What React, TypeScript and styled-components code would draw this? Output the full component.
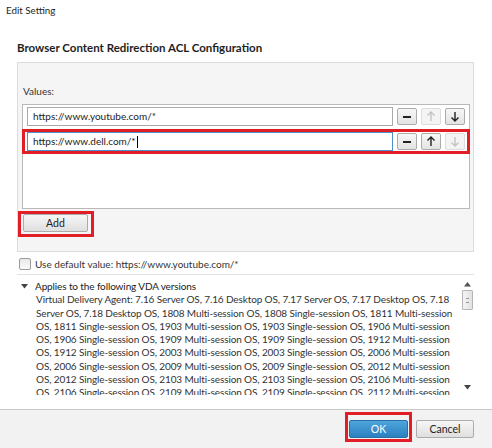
import React from 'react'
import styled, { createGlobalStyle } from 'styled-components'

const GlobalStyle = createGlobalStyle`
  html, body {
    margin: 0;
    padding: 0;
    background: #ffffff;
  }
  body {
    font-family: Lato, "Open Sans", "Liberation Sans", sans-serif;
    color: #1e1e1e;
  }
`

const Dialog = styled.div`
  width: 492px;
  height: 448px;
  display: flex;
  flex-direction: column;
  overflow: hidden;
  background: #fff;
`

const TitleBar = styled.div`
  height: 20px;
  line-height: 20px;
  padding-left: 6px;
  font-size: 9.8px;
`

const Body = styled.div`
  flex: 1;
  padding: 0 18px 0 17px;
  display: flex;
  flex-direction: column;
  min-height: 0;
`

const Heading = styled.h2`
  margin: 20px 0 6px;
  height: 16px;
  line-height: 16px;
  font-size: 11.5px;
  font-weight: 700;
`

const GroupBox = styled.div`
  background: #f5f5f5;
  border: 1px solid #dcdcdc;
  padding: 21px 3px 14px 4px;
`

const FieldLabel = styled.div`
  font-size: 10px;
  line-height: 14px;
  height: 14px;
  padding-left: 1px;
  margin-bottom: 6px;
  color: #333;
`

const ListBox = styled.div`
  height: 105px;
  box-sizing: border-box;
  background: #fff;
  border: 1px solid #b9b9b9;
`

const Row = styled.div<{ $highlight?: boolean }>`
  display: flex;
  align-items: center;
  gap: 4px;
  height: 19px;
  padding: ${p => (p.$highlight ? '0 2px 0 2px' : '2px 4px 2px 4px')};
  margin: ${p => (p.$highlight ? '1px -1px 0' : '0')};
  border: ${p => (p.$highlight ? '3px solid #e11d26' : 'none')};
`

const ValueInput = styled.div<{ $focused?: boolean }>`
  flex: 1;
  height: 19px;
  box-sizing: border-box;
  border: 1px solid ${p => (p.$focused ? '#4a90cf' : '#a9a9a9')};
  background: #fff;
  font-size: 10px;
  line-height: 17px;
  padding-left: 5px;
  color: #222;
  display: flex;
  align-items: center;
`

const Caret = styled.span`
  display: inline-block;
  width: 1px;
  height: 12px;
  background: #000;
  margin-left: 1px;
`

const IconButton = styled.div<{ $disabled?: boolean }>`
  width: 20px;
  height: 17px;
  box-sizing: border-box;
  border: 1px solid ${p => (p.$disabled ? '#dcdcdc' : '#acacac')};
  border-radius: 2px;
  background: ${p =>
    p.$disabled ? '#f4f4f4' : 'linear-gradient(#f7f7f7, #e3e3e3)'};
  display: flex;
  align-items: center;
  justify-content: center;
  color: ${p => (p.$disabled ? '#c4c4c4' : '#222')};
`

const ButtonGroup = styled.div`
  display: flex;
  gap: 4px;
`

const RedFrame = styled.div`
  display: inline-flex;
  align-self: flex-start;
  border: 3px solid #e11d26;
`

const AddFrame = styled(RedFrame)`
  margin: 2px 0 0 -4px;
  padding: 0 3px 2px 2px;
`

const PushButton = styled.div<{ $primary?: boolean; $w: number }>`
  width: ${p => p.$w}px;
  height: 18px;
  box-sizing: border-box;
  border: 1px solid ${p => (p.$primary ? '#2a6ea6' : '#acacac')};
  border-radius: 2px;
  background: ${p =>
    p.$primary
      ? 'linear-gradient(#4fa5dc, #2b80c0)'
      : 'linear-gradient(#f6f6f6, #dfdfdf)'};
  color: ${p => (p.$primary ? '#fff' : '#222')};
  font-size: 10.5px;
  display: flex;
  align-items: center;
  justify-content: center;
`

const CheckRow = styled.label`
  display: flex;
  align-items: center;
  gap: 4px;
  margin: 5px 0 0 2px;
  height: 13px;
  font-size: 10px;
  color: #333;
`

const CheckBox = styled.span`
  width: 12px;
  height: 12px;
  box-sizing: border-box;
  border: 1px solid #9a9a9a;
  border-radius: 2px;
  background: linear-gradient(#e9e9e9, #fafafa);
`

const Divider = styled.div`
  height: 1px;
  background: #e3e3e3;
  margin-top: 4px;
`

const InfoPane = styled.div`
  display: flex;
  height: 115px;
  margin-top: 5px;
`

const InfoText = styled.div`
  flex: 1;
  overflow: hidden;
  padding-left: 4px;
  font-size: 10px;
  letter-spacing: -0.12px;
  line-height: 13.3px;
  color: #333;
`

const InfoTitle = styled.div`
  display: flex;
  align-items: center;
  gap: 7px;
  height: 13.3px;
  color: #222;
`

const InfoLine = styled.div`
  white-space: nowrap;
  padding-left: 15px;
`

const ScrollBar = styled.div`
  width: 13px;
  display: flex;
  flex-direction: column;
  align-items: center;
  padding-top: 2px;
  height: 110px;
  box-sizing: border-box;
`

const ScrollThumb = styled.div`
  width: 11px;
  height: 20px;
  box-sizing: border-box;
  border: 1px solid #b5b5b5;
  border-radius: 1px;
  background: linear-gradient(90deg, #f4f4f4, #e2e2e2);
  margin-top: 3px;
  display: flex;
  align-items: center;
  justify-content: center;
`

const Grip = styled.span`
  width: 3px;
  height: 5px;
  border-top: 1px solid #999;
  border-bottom: 1px solid #999;
  box-sizing: border-box;
`

const Spacer = styled.div`
  flex: 1;
`

const Footer = styled.div`
  height: 36px;
  border-top: 1px solid #c9c9c9;
  background: #f2f2f2;
  display: flex;
  align-items: flex-start;
  justify-content: flex-end;
  gap: 4px;
  padding: 2px 18px 0 0;
`

const OkFrame = styled(RedFrame)`
  padding: 5px 1px 1px 1px;
`

const CancelWrap = styled.div`
  padding-top: 8px;
`

const Minus = () => (
  <svg width="10" height="10" viewBox="0 0 10 10">
    <rect x="1" y="4" width="8" height="2" fill="currentColor" />
  </svg>
)

const Arrow = ({ up }: { up?: boolean }) => (
  <svg width="10" height="11" viewBox="0 0 10 11" style={{ transform: up ? 'none' : 'rotate(180deg)' }}>
    <path d="M5 1 L5 10 M1.5 4.5 L5 1 L8.5 4.5" stroke="currentColor" strokeWidth="1.4" fill="none" />
  </svg>
)

const Tri = ({ down }: { down?: boolean }) => (
  <svg width="7" height="5" viewBox="0 0 7 5">
    <path d={down ? 'M0 0 L7 0 L3.5 4.5 Z' : 'M0 4.5 L7 4.5 L3.5 0 Z'} fill={down ? '#444' : '#555'} />
  </svg>
)

const infoLines = [
  'Virtual Delivery Agent: 7.16 Server OS, 7.16 Desktop OS, 7.17 Server OS, 7.17 Desktop OS, 7.18',
  'Server OS, 7.18 Desktop OS, 1808 Multi-session OS, 1808 Single-session OS, 1811 Multi-session',
  'OS, 1811 Single-session OS, 1903 Multi-session OS, 1903 Single-session OS, 1906 Multi-session',
  'OS, 1906 Single-session OS, 1909 Multi-session OS, 1909 Single-session OS, 1912 Multi-session',
  'OS, 1912 Single-session OS, 2003 Multi-session OS, 2003 Single-session OS, 2006 Multi-session',
  'OS, 2006 Single-session OS, 2009 Multi-session OS, 2009 Single-session OS, 2012 Multi-session',
  'OS, 2012 Single-session OS, 2103 Multi-session OS, 2103 Single-session OS, 2106 Multi-session',
  'OS, 2106 Single-session OS, 2109 Multi-session OS, 2109 Single-session OS, 2112 Multi-session',
]

export default function App() {
  return (
    <Dialog>
      <GlobalStyle />
      <TitleBar>Edit Setting</TitleBar>
      <Body>
        <Heading>Browser Content Redirection ACL Configuration</Heading>
        <GroupBox>
          <FieldLabel>Values:</FieldLabel>
          <ListBox>
            <Row>
              <ValueInput>https://www.youtube.com/*</ValueInput>
              <ButtonGroup>
                <IconButton><Minus /></IconButton>
                <IconButton $disabled><Arrow up /></IconButton>
                <IconButton><Arrow /></IconButton>
              </ButtonGroup>
            </Row>
            <Row $highlight>
              <ValueInput $focused>
                https://www.dell.com/*<Caret />
              </ValueInput>
              <ButtonGroup>
                <IconButton><Minus /></IconButton>
                <IconButton><Arrow up /></IconButton>
                <IconButton $disabled><Arrow /></IconButton>
              </ButtonGroup>
            </Row>
          </ListBox>
          <AddFrame>
            <PushButton $w={65}>Add</PushButton>
          </AddFrame>
        </GroupBox>
        <CheckRow>
          <CheckBox />
          Use default value: https://www.youtube.com/*
        </CheckRow>
        <Divider />
        <InfoPane>
          <InfoText>
            <InfoTitle>
              <Tri down />
              Applies to the following VDA versions
            </InfoTitle>
            {infoLines.map(line => (
              <InfoLine key={line}>{line}</InfoLine>
            ))}
          </InfoText>
          <ScrollBar>
            <Tri />
            <ScrollThumb><Grip /></ScrollThumb>
            <Spacer />
            <Tri down />
          </ScrollBar>
        </InfoPane>
        <Spacer />
      </Body>
      <Footer>
        <OkFrame>
          <PushButton $primary $w={59}>OK</PushButton>
        </OkFrame>
        <CancelWrap>
          <PushButton $w={58}>Cancel</PushButton>
        </CancelWrap>
      </Footer>
    </Dialog>
  )
}
